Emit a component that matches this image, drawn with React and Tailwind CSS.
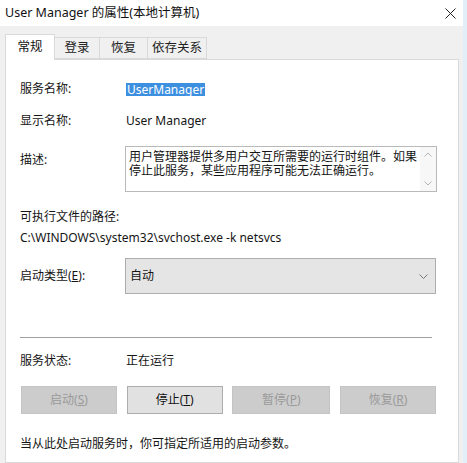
const font = "font-['Noto_Sans','Noto_Sans_CJK_SC',sans-serif]";

function Tab({ label, active, w }) {
  if (active) {
    return (
      <div className="relative z-10 -mb-px flex h-[26px] w-[50px] items-center justify-center border border-b-0 border-[#d9d9d9] bg-white text-[12.5px] text-[#111]">
        {label}
      </div>
    );
  }
  return (
    <div
      className={
        "mt-[3px] flex h-[22px] items-center justify-center border border-l-0 border-[#d9d9d9] bg-[#f0f0f0] text-[12.5px] text-[#222] " +
        w
      }
    >
      {label}
    </div>
  );
}

function Btn({ children, disabled, w = "w-[96px]" }) {
  return (
    <div
      className={
        "flex h-[28px] items-center justify-center border text-[12px] " +
        w +
        " " +
        (disabled
          ? "border-[#c4c4c4] bg-[#cccccc] text-[#9a9a9a]"
          : "border-[#adadad] bg-[#e1e1e1] text-[#111]")
      }
    >
      {children}
    </div>
  );
}

export default function App() {
  return (
    <div className={"flex h-[463px] w-[467px] overflow-hidden bg-[#f0f0f0] " + font}>
      <div className="flex flex-1 flex-col">
        {/* title bar */}
        <div className="flex h-[26px] items-center justify-between bg-white pl-[5px] pr-[6px]">
          <span className="text-[12.5px] text-[#111]">User Manager 的属性(本地计算机)</span>
          <svg width="11" height="11" viewBox="0 0 11 11" className="mr-[1px]">
            <path d="M0.5 0.5 L10.5 10.5 M10.5 0.5 L0.5 10.5" stroke="#222" strokeWidth="1" />
          </svg>
        </div>

        {/* tabs */}
        <div className="mt-[8px] flex pl-[5px]">
          <Tab label="常规" active />
          <Tab label="登录" w="w-[45px]" />
          <Tab label="恢复" w="w-[48px]" />
          <Tab label="依存关系" w="w-[59px]" />
        </div>

        {/* panel */}
        <div className="ml-[5px] mr-[4px] flex flex-1 flex-col border border-[#d9d9d9] bg-white pl-[14px] text-[12px] text-[#151515]">
          <div className="mt-[21px] flex h-[16px] items-center">
            <span className="w-[106px]">服务名称:</span>
            <span className="bg-[#3d8fe0] px-px leading-[13px] text-white">UserManager</span>
          </div>

          <div className="mt-[16px] flex h-[16px] items-center">
            <span className="w-[106px]">显示名称:</span>
            <span>User Manager</span>
          </div>

          <div className="mt-[17px] flex">
            <span className="mt-[6px] h-[16px] w-[105px] leading-[16px]">描述:</span>
            <div className="flex h-[46px] w-[312px] border border-[#b9b9b9]">
              <div className="flex flex-1 flex-col pl-[3px] pt-[3px]">
                <span className="leading-[14px]">用户管理器提供多用户交互所需要的运行时组件。如果</span>
                <span className="leading-[14px]">停止此服务，某些应用程序可能无法正确运行。</span>
              </div>
              <div className="flex w-[16px] flex-col items-center justify-between bg-[#f7f7f7] py-[5px]">
                <svg width="8" height="5" viewBox="0 0 8 5">
                  <path d="M0.5 4.5 L4 1 L7.5 4.5" fill="none" stroke="#b5b5b5" strokeWidth="1" />
                </svg>
                <svg width="8" height="5" viewBox="0 0 8 5">
                  <path d="M0.5 0.5 L4 4 L7.5 0.5" fill="none" stroke="#b5b5b5" strokeWidth="1" />
                </svg>
              </div>
            </div>
          </div>

          <div className="mt-[17px] flex h-[16px] items-center">可执行文件的路径:</div>
          <div className="mt-[5px] flex h-[16px] items-center">
            C:\WINDOWS\system32\svchost.exe -k netsvcs
          </div>

          <div className="mt-[12px] flex items-center">
            <span className="w-[105px]">
              启动类型(<span className="underline">E</span>):
            </span>
            <div className="flex h-[36px] w-[311px] items-center justify-between border border-[#adadad] bg-[#e5e5e5] pl-[4px] pr-[7px]">
              <span>自动</span>
              <svg width="9" height="5" viewBox="0 0 9 5">
                <path d="M0.5 0.5 L4.5 4.5 L8.5 0.5" fill="none" stroke="#777" strokeWidth="1" />
              </svg>
            </div>
          </div>

          <div className="mt-[43px] h-px w-[412px] bg-[#a0a0a0]" />

          <div className="mt-[15px] flex h-[16px] items-center">
            <span className="w-[106px]">服务状态:</span>
            <span>正在运行</span>
          </div>

          <div className="mt-[17px] flex w-[416px] justify-between pl-px">
            <Btn disabled>
              启动(<span className="underline">S</span>)
            </Btn>
            <Btn>
              停止(<span className="underline">T</span>)
            </Btn>
            <Btn disabled w="w-[98px]">
              暂停(<span className="underline">P</span>)
            </Btn>
            <Btn disabled>
              恢复(<span className="underline">R</span>)
            </Btn>
          </div>

          <div className="mt-[22px] flex h-[16px] items-center">当从此处启动服务时，你可指定所适用的启动参数。</div>
        </div>
      </div>
      <div className="w-[4px] bg-[#e2eff9]" />
    </div>
  );
}
